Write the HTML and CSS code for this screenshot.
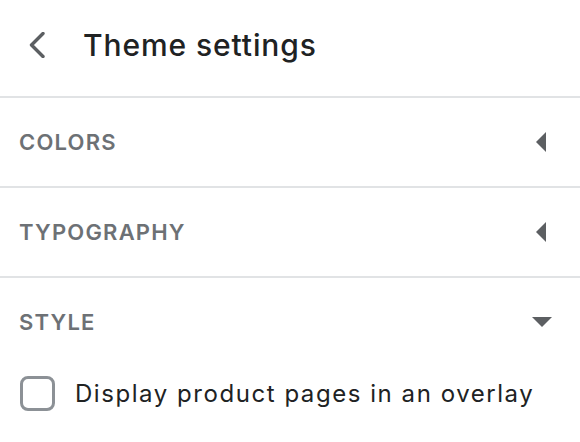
FILE: index.html
```html
<!DOCTYPE html>
<html>
<head>
<meta charset="utf-8">
<link rel="stylesheet" href="styles.css">
</head>
<body>
<div class="panel">
  <header class="header">
    <svg class="back" width="16" height="26" viewBox="0 0 16 26"><polyline points="14,1.5 2.5,13 14,24.5" fill="none" stroke="#5c5f62" stroke-width="3.4" stroke-linecap="round" stroke-linejoin="round"/></svg>
    <h1 class="title">Theme settings</h1>
  </header>
  <div class="section">
    <span class="label">COLORS</span>
    <svg class="caret" width="20" height="20" viewBox="0 0 20 20"><polygon points="14,0 14,20 4,10" fill="#5c5f62"/></svg>
  </div>
  <div class="section">
    <span class="label">TYPOGRAPHY</span>
    <svg class="caret" width="20" height="20" viewBox="0 0 20 20"><polygon points="14,0 14,20 4,10" fill="#5c5f62"/></svg>
  </div>
  <div class="section open">
    <span class="label">STYLE</span>
    <svg class="caret" width="20" height="20" viewBox="0 0 20 20"><polygon points="0,5 20,5 10,15" fill="#5c5f62"/></svg>
  </div>
  <label class="option">
    <span class="box"></span>
    <span class="option-text">Display product pages in an overlay</span>
  </label>
</div>
</body>
</html>
```

FILE: styles.css
```css
html, body {
  margin: 0;
  padding: 0;
  background: #ffffff;
}
body {
  font-family: Inter, "Noto Sans", sans-serif;
  color: #202223;
}
.panel {
  width: 580px;
}
.header {
  height: 96px;
  display: flex;
  align-items: center;
  padding-left: 29px;
  border-bottom: 2px solid #e1e3e5;
  box-sizing: content-box;
}
.back {
  display: block;
  margin-top: -7px;
}
.title {
  margin: -7px 0 0 38px;
  font-size: 30px;
  font-weight: 500;
  letter-spacing: 0.9px;
  color: #202223;
}
.section {
  height: 88px;
  display: flex;
  align-items: center;
  justify-content: space-between;
  padding: 0 28px 0 19px;
  border-bottom: 2px solid #e1e3e5;
}
.section.open {
  border-bottom: none;
}
.label {
  font-size: 22px;
  font-weight: 600;
  letter-spacing: 1.2px;
  color: #6d7175;
}
.caret {
  display: block;
}
.option {
  display: flex;
  align-items: center;
  padding-left: 20px;
  height: 54px;
}
.box {
  width: 35px;
  height: 35px;
  box-sizing: border-box;
  border: 3.5px solid #8c9196;
  border-radius: 8px;
  flex: none;
}
.option-text {
  margin-left: 20px;
  font-size: 24px;
  letter-spacing: 1.55px;
  color: #202223;
}
```
